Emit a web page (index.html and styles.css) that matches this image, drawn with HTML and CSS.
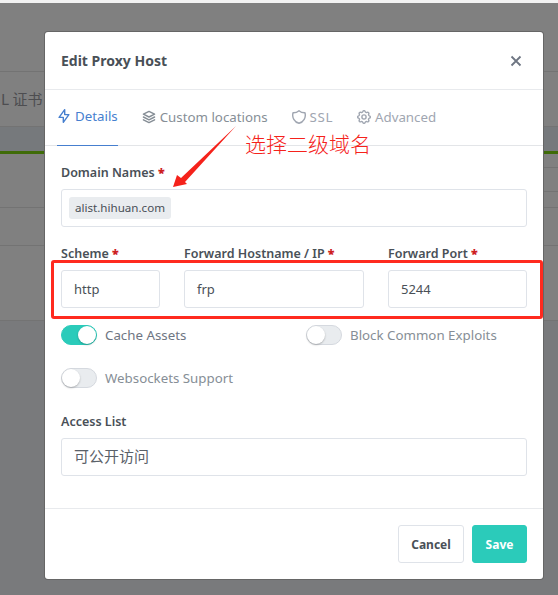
FILE: index.html
```html
<!DOCTYPE html>
<html lang="zh">
<head>
<meta charset="utf-8">
<title>Edit Proxy Host</title>
<link rel="stylesheet" href="styles.css">
</head>
<body>
<div class="page">
  <div class="backdrop">
    <div class="row r1"></div>
    <div class="row r2"><span class="cert">L 证书</span></div>
    <div class="row r3"></div>
    <div class="row r4"><div class="stub s1"></div><div class="stub s2"></div></div>
    <div class="row r5"></div>
    <div class="row r6"></div>
    <div class="r7"></div>
  </div>
  <section class="modal">
    <header class="modal-head">
      <h1>Edit Proxy Host</h1>
      <svg class="close" viewBox="0 0 12 12" width="12" height="12"><path d="M1.5 1.5l9 9M10.5 1.5l-9 9"/></svg>
    </header>
    <nav class="tabs">
      <a class="tab active"><svg viewBox="2 2 20 20" width="14" height="14"><path d="M13 3v7h6l-8 11v-7H5l8-11"/></svg>Details</a>
      <a class="tab"><svg viewBox="2 2 20 20" width="14" height="14"><path d="M12 4L4 8l8 4 8-4-8-4M4 12l8 4 8-4M4 16l8 4 8-4"/></svg>Custom locations</a>
      <a class="tab"><svg viewBox="2 2 20 20" width="14" height="14"><path d="M12 3a12 12 0 0 0 8.500 3a12 12 0 0 1-8.500 15a12 12 0 0 1-8.500-15a12 12 0 0 0 8.500-3"/></svg>SSL</a>
      <a class="tab"><svg viewBox="2 2 20 20" width="14" height="14"><path d="M10.300 4.300c.4-1.800 3-1.800 3.400 0a1.700 1.700 0 0 0 2.600 1.100c1.500-.9 3.300.8 2.400 2.400a1.700 1.700 0 0 0 1 2.500c1.800.4 1.800 3 0 3.400a1.700 1.700 0 0 0-1 2.600c.9 1.500-.9 3.300-2.400 2.400a1.700 1.700 0 0 0-2.600 1c-.4 1.800-3 1.800-3.400 0a1.700 1.700 0 0 0-2.600-1c-1.500.9-3.300-.9-2.400-2.400a1.700 1.700 0 0 0-1-2.600c-1.800-.4-1.800-3 0-3.400a1.700 1.700 0 0 0 1-2.500c-.9-1.600.9-3.300 2.400-2.400 1 .6 2.300 0 2.600-1.100"/><circle cx="12" cy="12" r="3"/></svg>Advanced</a>
    </nav>
    <div class="modal-body">
      <div class="field">
        <label class="label">Domain Names <b>*</b></label>
        <div class="box domain"><span class="tag">alist.hihuan.com</span></div>
      </div>
      <div class="forward">
        <div class="field f-scheme"><label class="label">Scheme <b>*</b></label><div class="box">http</div></div>
        <div class="field f-host"><label class="label">Forward Hostname / IP <b>*</b></label><div class="box">frp</div></div>
        <div class="field f-port"><label class="label">Forward Port <b>*</b></label><div class="box">5244</div></div>
      </div>
      <div class="switches">
        <div class="switch on"><i></i>Cache Assets</div>
        <div class="switch"><i></i>Block Common Exploits</div>
        <div class="switch"><i></i>Websockets Support</div>
      </div>
      <div class="field">
        <label class="label">Access List</label>
        <div class="box cjk">可公开访问</div>
      </div>
    </div>
    <footer class="modal-foot">
      <button class="btn cancel">Cancel</button>
      <button class="btn save">Save</button>
    </footer>
  </section>
  <div class="mark-box"></div>
  <div class="mark-text">选择二级域名</div>
  <svg class="mark-arrow" viewBox="0 0 70 70" width="70" height="70"><path d="M65 1L10 53 6 50 2 62 16 59 14 57z"/></svg>
</div>
</body>
</html>
```

FILE: styles.css
```css
* { box-sizing: border-box; }
html, body { margin: 0; padding: 0; }
body { font-family: "Noto Sans", "Noto Sans CJK SC", sans-serif; color: #495057; }
.page { position: relative; width: 558px; height: 595px; overflow: hidden; background: #f2f2f2; padding-top: 3px; }

.backdrop { height: 592px; background: #808080; display: flex; flex-direction: column; }
.row { border-bottom: 1px solid #737373; flex: none; }
.r1 { height: 69px; }
.r2 { height: 55px; display: flex; align-items: center; }
.r3 { height: 27px; background: #76797c; border-bottom: 3px solid #3f6b08; }
.r4 { height: 54px; }
.r5 { height: 38px; }
.r6 { height: 75px; }
.r7 { flex: 1; background: #797a7c; }
.stub { margin-left: auto; width: 15px; border-bottom: 1px solid #737373; }
.s1 { height: 14px; }
.s2 { height: 24px; }
.cert { margin-left: 1px; padding-bottom: 2px; font-size: 15px; color: #4d4d50; font-family: "Noto Sans CJK SC", sans-serif; }

.modal { position: absolute; left: 45px; top: 32px; width: 498px; height: 547px; background: #fff; border-radius: 3px; display: flex; flex-direction: column; box-shadow: 0 0 0 1px #666; }
.modal-head { height: 58px; padding: 0 21px 0 16px; display: flex; align-items: center; justify-content: space-between; border-bottom: 1px solid #e8eaed; }
.modal-head h1 { margin: 0; font-size: 14px; font-weight: 700; color: #495057; }
.close { fill: none; stroke: #6e7582; stroke-width: 1.800; }

.tabs { height: 56px; padding: 0 12px; display: flex; gap: 24px; border-bottom: 1px solid #e3e5e8; }
.tab { display: flex; align-items: center; gap: 4px; height: 56px; padding-bottom: 3px; font-size: 13.300px; color: #a0a6b1; }
.tab svg { fill: none; stroke: currentColor; stroke-width: 2; stroke-linejoin: round; stroke-linecap: round; }
.tab.active { color: #467fcf; border-bottom: 1px solid #467fcf; }
.tab:nth-child(2) { color: #868e96; }
.tab:nth-child(3) { letter-spacing: .6px; }

.modal-body { flex: 1; padding: 0 16px; }
.field { display: flex; flex-direction: column; }
.label { display: block; margin-bottom: 8px; font-size: 12.500px; line-height: 17px; font-weight: 600; color: #495057; }
.label b { color: #cd201f; }
.modal-body > .field:first-child { padding-top: 18px; }
.box { height: 38px; display: flex; align-items: center; padding: 0 12px; background: #fff; border: 1px solid #dfe3e9; border-radius: 3px; font-size: 13px; color: #495057; }
.domain { padding: 0 7px; }
.tag { height: 22px; display: flex; align-items: center; padding: 0 6px 1px; background: #e9ecef; border-radius: 3px; font-size: 11.600px; }

.forward { display: flex; gap: 24px; margin-top: 18px; }
.f-scheme { width: 99px; }
.f-host { width: 180px; }
.f-port { width: 139px; }

.switches { display: grid; grid-template-columns: 245px 1fr; row-gap: 21px; margin-top: 16px; margin-bottom: 24px; }
.switch { display: flex; align-items: center; gap: 8px; height: 22px; font-size: 13.300px; color: #868e96; }
.switch.on { color: #6e7582; }
.switch i { position: relative; width: 36px; height: 20px; background: #e9ecef; border: 1px solid #d5d9df; border-radius: 10px; }
.switch i::after { content: ""; position: absolute; left: 0; top: 0; width: 18px; height: 18px; background: #fff; border-radius: 50%; box-shadow: 0 1px 2px rgba(0,0,0,.25); }
.switch.on i { background: #2bcbba; border-color: #2bcbba; }
.switch.on i::after { left: 16px; }
.cjk { font-family: "Noto Sans CJK SC", sans-serif; font-size: 15px; padding-bottom: 3px; color: #5a6169; }

.modal-foot { height: 71px; padding: 0 16px; display: flex; justify-content: flex-end; align-items: center; gap: 8px; border-top: 1px solid #e8eaed; }
.btn { height: 38px; padding: 0; border-radius: 3px; font-family: inherit; font-size: 12px; font-weight: 700; }
.cancel { width: 66px; background: #fff; border: 1px solid #dfe3e9; color: #495057; }
.save { width: 55px; background: #2bcbba; border: 1px solid #2bcbba; color: #fff; }

.mark-box { position: absolute; left: 51px; top: 260px; width: 492px; height: 59px; border: 3px solid #ff2a1f; border-radius: 3px; }
.mark-text { position: absolute; left: 245px; top: 129px; font-family: "Noto Sans CJK SC", sans-serif; font-size: 21px; font-weight: 300; line-height: 28px; color: #f5221b; }
.mark-arrow { position: absolute; left: 171px; top: 125px; fill: #f5221b; }
```
